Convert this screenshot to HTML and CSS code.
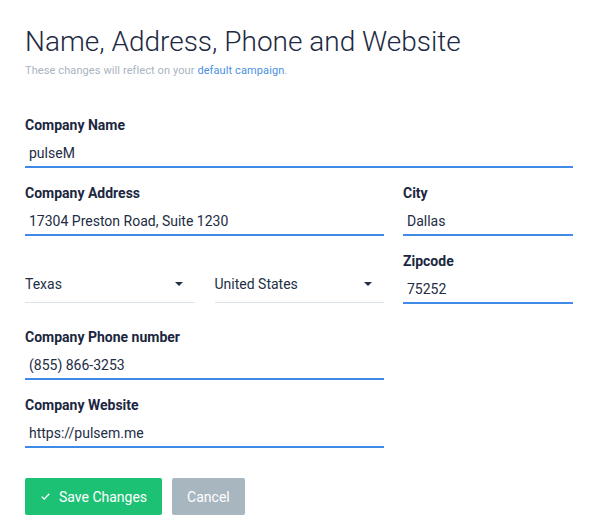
FILE: index.html
```html
<!DOCTYPE html>
<html lang="en">
<head>
<meta charset="utf-8">
<title>Name, Address, Phone and Website</title>
<link rel="stylesheet" href="styles.css">
</head>
<body>
<main class="page">
  <h1 class="title">Name, Address, Phone and Website</h1>
  <p class="subtitle">These changes will reflect on your <a href="#" class="link">default campaign</a>.</p>

  <form class="form">
    <div class="field">
      <label class="label">Company Name</label>
      <input class="input" type="text" value="pulseM">
    </div>

    <div class="columns">
      <div class="col-left">
        <div class="field">
          <label class="label">Company Address</label>
          <input class="input" type="text" value="17304 Preston Road, Suite 1230">
        </div>
        <div class="selects">
          <div class="select"><span>Texas</span><span class="caret"></span></div>
          <div class="select"><span>United States</span><span class="caret"></span></div>
        </div>
        <div class="field">
          <label class="label">Company Phone number</label>
          <input class="input" type="text" value="(855) 866-3253">
        </div>
        <div class="field">
          <label class="label">Company Website</label>
          <input class="input" type="text" value="https://pulsem.me">
        </div>
      </div>
      <div class="col-right">
        <div class="field">
          <label class="label">City</label>
          <input class="input" type="text" value="Dallas">
        </div>
        <div class="field">
          <label class="label">Zipcode</label>
          <input class="input" type="text" value="75252">
        </div>
      </div>
    </div>

    <div class="actions">
      <button type="button" class="btn btn-save">
        <svg class="check" width="9" height="7" viewBox="0 0 9 7"><path d="M0.7 3.6 L3.2 6 L8.3 0.8" fill="none" stroke="#fff" stroke-width="1.3"/></svg>
        <span>Save Changes</span>
      </button>
      <button type="button" class="btn btn-cancel">Cancel</button>
    </div>
  </form>
</main>
</body>
</html>
```

FILE: styles.css
```css
* { box-sizing: border-box; }
html, body { margin: 0; padding: 0; background: #fff; }
body { font-family: Roboto, "Liberation Sans", sans-serif; color: #1f2a40; }

.page { padding: 26px 26px 0 25px; width: 599px; }

.title {
  margin: 0;
  font-size: 28px;
  line-height: 32px;
  font-weight: 300;
  color: #1d2942;
}

.subtitle {
  margin: 5px 0 0;
  font-size: 11px;
  line-height: 16px;
  letter-spacing: 0.1px;
  color: #a9b4bf;
}
.link { color: #4a90e2; text-decoration: none; }

.form { margin-top: 36px; width: 548px; }

.field { display: flex; flex-direction: column; margin-bottom: 15px; }
.label {
  font-size: 14px;
  line-height: 20px;
  font-weight: 700;
  color: #1b2740;
  margin-bottom: 4px;
}
.input {
  height: 29px;
  border: 0;
  border-bottom: 2px solid #3f8ae6;
  padding: 0 4px;
  margin: 0;
  font-family: Roboto, "Liberation Sans", sans-serif;
  font-size: 14px;
  color: #222d44;
  background: transparent;
  outline: none;
  width: 100%;
}

.columns { display: flex; gap: 19px; }
.col-left { width: 359px; }
.col-right { width: 170px; }

.selects {
  display: grid;
  grid-template-columns: 1fr 1fr;
  gap: 20px;
  margin-bottom: 24px;
}
.select {
  display: flex;
  justify-content: space-between;
  align-items: center;
  padding: 23px 12px 8px 0;
  line-height: 20px;
  font-size: 14px;
  color: #242f45;
  border-bottom: 1px solid #dce3e9;
}
.caret {
  width: 0; height: 0;
  border-left: 4px solid transparent;
  border-right: 4px solid transparent;
  border-top: 4px solid #242f45;
}

.actions { display: flex; gap: 10px; margin-top: 15px; }
.btn {
  height: 37px;
  border: 0;
  border-radius: 2px;
  font-family: Roboto, "Liberation Sans", sans-serif;
  font-size: 14px;
  color: #fff;
  padding: 0 15px;
  display: flex;
  align-items: center;
  cursor: pointer;
}
.btn-save { background: #1cc174; padding-left: 16px; gap: 9px; }
.btn-cancel { background: #a8b6bf; }
.check { display: block; }
```
